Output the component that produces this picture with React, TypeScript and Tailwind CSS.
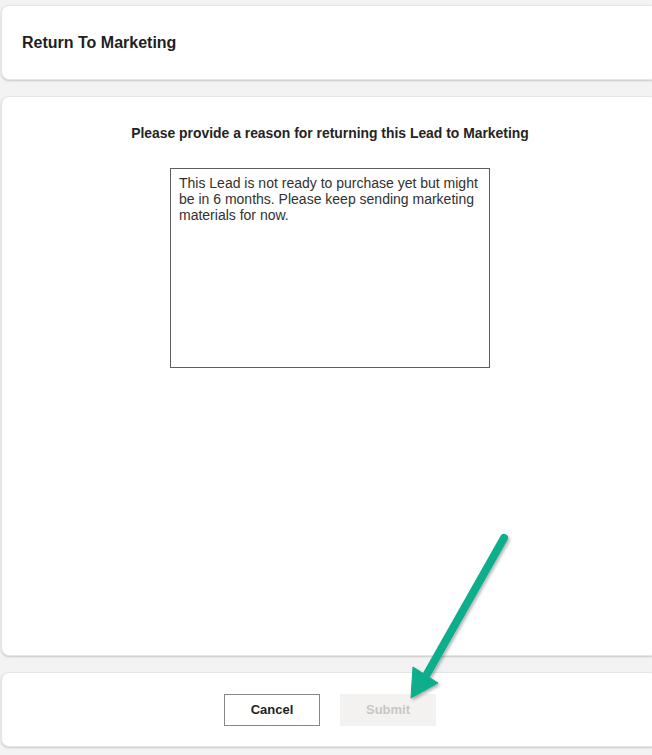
import React from "react";

const font = { fontFamily: '"Segoe UI", "Liberation Sans", Arial, sans-serif' };

function Card({ className, children }: { className: string; children?: React.ReactNode }) {
  return (
    <div
      className={`w-[658px] rounded-lg bg-white border border-[#e6e6e6] shadow-[0_1px_2px_rgba(0,0,0,0.18)] ${className}`}
    >
      {children}
    </div>
  );
}

export default function App() {
  return (
    <div className="relative w-[652px] h-[755px] overflow-hidden bg-[#f3f3f3] text-[#201f1e]" style={font}>
      <div className="flex flex-col gap-4 pl-px pt-[5px]">
        <Card className="h-[75px] flex items-center px-5">
          <h1 className="text-[16px] font-bold">Return To Marketing</h1>
        </Card>

        <Card className="h-[560px] flex flex-col items-center pt-[26px]">
          <p className="text-[13.9px] font-bold text-[#252423]">
            Please provide a reason for returning this Lead to Marketing
          </p>
          <textarea
            className="mt-[24px] w-[320px] h-[200px] border border-[#605e5c] px-2 py-[6px] text-[14px] leading-[16px] resize-none outline-none text-[#323130]"
            style={font}
            defaultValue="This Lead is not ready to purchase yet but might be in 6 months. Please keep sending marketing materials for now."
          />
        </Card>

        <Card className="h-[75px] flex items-center justify-center gap-5">
          <button className="w-[96px] h-[32px] border border-[#8a8886] bg-white text-[13px] font-bold text-[#201f1e]">
            Cancel
          </button>
          <button
            disabled
            className="w-[96px] h-[32px] bg-[#f3f2f1] text-[13px] font-bold text-[#c8c6c4]"
          >
            Submit
          </button>
        </Card>
      </div>

      <svg className="absolute left-0 top-0 pointer-events-none" width="652" height="755">
        <defs>
          <filter id="sh" x="-20%" y="-20%" width="140%" height="140%">
            <feDropShadow dx="1.5" dy="2" stdDeviation="1.5" floodColor="#000" floodOpacity="0.3" />
          </filter>
        </defs>
        <g filter="url(#sh)" fill="#0aae8b" stroke="#0aae8b">
          <line x1="504" y1="538" x2="427" y2="674" strokeWidth="8" strokeLinecap="round" />
          <polygon points="411,698 413,667 438,683" strokeWidth="1" strokeLinejoin="round" />
        </g>
      </svg>
    </div>
  );
}
